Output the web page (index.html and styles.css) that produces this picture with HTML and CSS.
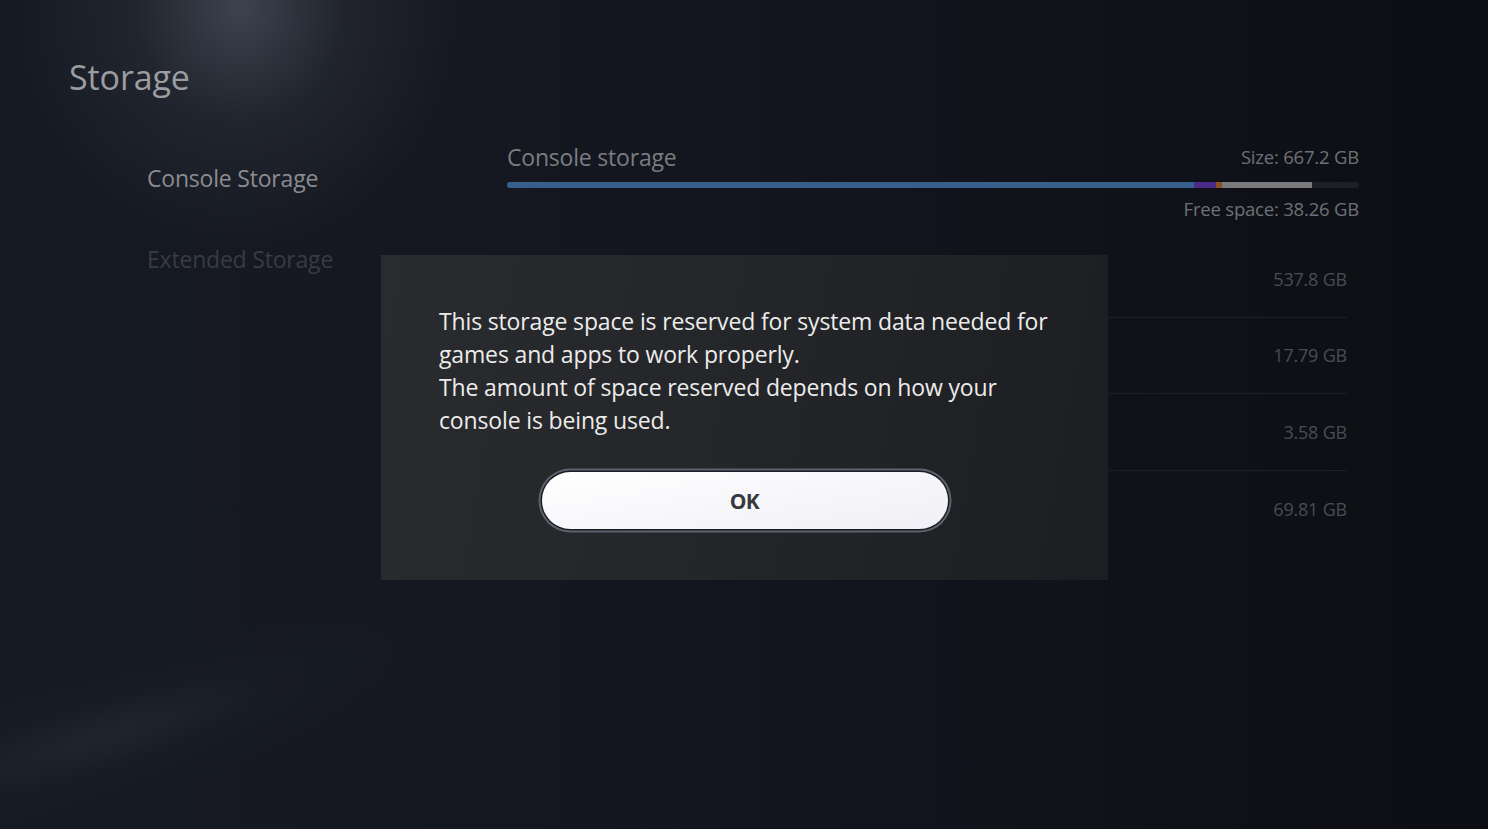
FILE: index.html
```html
<!DOCTYPE html>
<html lang="en">
<head>
<meta charset="utf-8">
<title>Storage</title>
<link rel="stylesheet" href="styles.css">
</head>
<body>
<div class="screen">
  <div class="glow-top"></div>
  <div class="glow-streak"></div>
  <h1 class="title">Storage</h1>
  <div class="layout">
    <nav class="sidebar">
      <div class="nav-item active">Console Storage</div>
      <div class="nav-item dim">Extended Storage</div>
    </nav>
    <main class="content">
      <div class="storage-head">
        <span class="storage-label">Console storage</span>
        <span class="storage-size">Size: 667.2 GB</span>
      </div>
      <div class="bar">
        <span class="seg seg-blue" style="width:687px"></span>
        <span class="seg seg-purple" style="width:22px"></span>
        <span class="seg seg-orange" style="width:6px"></span>
        <span class="seg seg-gray" style="width:90px"></span>
      </div>
      <div class="free">Free space: 38.26 GB</div>
      <ul class="rows">
        <li class="row"><span class="row-val">537.8 GB</span></li>
        <li class="row"><span class="row-val">17.79 GB</span></li>
        <li class="row"><span class="row-val">3.58 GB</span></li>
        <li class="row"><span class="row-val">69.81 GB</span></li>
      </ul>
    </main>
  </div>

  <div class="dialog">
    <p class="dialog-text">This storage space is reserved for system data needed for games and apps to work properly.<br>The amount of space reserved depends on how your console is being used.</p>
    <div class="dialog-actions">
      <button class="btn-ok">OK</button>
    </div>
  </div>
</div>
</body>
</html>
```

FILE: styles.css
```css
* { box-sizing: border-box; }

html, body {
  margin: 0;
  padding: 0;
  background: #12151c;
}

.screen {
  position: relative;
  width: 1488px;
  height: 829px;
  overflow: hidden;
  font-family: "Open Sans", "Noto Sans", sans-serif;
  background:
    linear-gradient(to right, #161a22 0%, #141720 40%, #10131a 70%, #0c0e13 100%);
}

.glow-top {
  position: absolute;
  left: -60px;
  top: -260px;
  width: 600px;
  height: 640px;
  background: radial-gradient(ellipse 50% 50% at 50% 42%, rgba(95,100,115,0.55) 0%, rgba(60,64,78,0.30) 35%, rgba(30,34,44,0) 75%);
  pointer-events: none;
}

.glow-streak {
  position: absolute;
  left: -220px;
  top: 655px;
  width: 720px;
  height: 140px;
  transform: rotate(-17deg);
  background: radial-gradient(ellipse 50% 50% at 45% 50%, rgba(44,50,62,0.45) 0%, rgba(32,37,47,0.2) 50%, rgba(20,24,32,0) 100%);
  pointer-events: none;
}

.title {
  position: relative;
  margin: 0;
  padding: 56px 0 0 69px;
  font-size: 34px;
  line-height: 42px;
  font-weight: 400;
  color: #9c9da0;
  letter-spacing: -0.1px;
}

.layout {
  position: relative;
  display: flex;
  margin-top: 44px;
}

.sidebar {
  width: 507px;
  padding: 20px 0 0 147px;
  display: flex;
  flex-direction: column;
  gap: 49px;
}

.nav-item {
  font-size: 23px;
  line-height: 32px;
  letter-spacing: -0.2px;
}
.nav-item.active { color: #8b8c8f; }
.nav-item.dim { color: #383b42; }

.content {
  width: 852px;
}

.storage-head {
  display: flex;
  justify-content: space-between;
  align-items: center;
  line-height: 30px;
}

.storage-label {
  font-size: 23px;
  color: #7b7c80;
  letter-spacing: -0.2px;
}

.storage-size {
  font-size: 18.5px;
  color: #6f7075;
  letter-spacing: -0.2px;
}

.bar {
  display: flex;
  height: 6px;
  margin-top: 10px;
  border-radius: 3px;
  overflow: hidden;
  background: #1d2027;
}
.seg { display: block; height: 100%; }
.seg-blue { background: #36608b; }
.seg-purple { background: #4a2a88; }
.seg-orange { background: #8c5026; }
.seg-gray { background: #7b7b7d; }

.free {
  margin-top: 8px;
  text-align: right;
  font-size: 18.5px;
  line-height: 26px;
  color: #6f7075;
  letter-spacing: -0.2px;
}

.rows {
  list-style: none;
  margin: 19px 12px 0 0;
  padding: 0;
}

.row {
  display: flex;
  justify-content: flex-end;
  align-items: center;
  height: 76.5px;
  border-bottom: 1px solid #1c1f26;
  font-size: 18px;
  color: #4a4c53;
  letter-spacing: -0.2px;
}
.row:last-child { border-bottom: none; }

.dialog {
  position: absolute;
  left: 381px;
  top: 255px;
  width: 727px;
  height: 325px;
  padding: 50px 49px 0 58px;
  background: linear-gradient(100deg, #2a2b2e 0%, #252629 45%, #1d1e22 100%);
}

.dialog-text {
  margin: 0;
  font-size: 23px;
  line-height: 33px;
  color: #ececec;
  letter-spacing: -0.15px;
}

.dialog-actions {
  display: flex;
  justify-content: center;
  margin: 35px -49px 0 -58px;
}

.btn-ok {
  width: 406px;
  height: 57px;
  border: none;
  border-radius: 29px;
  background: linear-gradient(170deg, #ffffff 0%, #f6f6fa 60%, #efeff5 100%);
  box-shadow: 0 0 0 1.5px #1b1d22, 0 0 0 3.5px #5e626c;
  font-family: "Open Sans", "Noto Sans", sans-serif;
  font-size: 21px;
  font-weight: 700;
  color: #38393c;
  letter-spacing: -0.5px;
  cursor: pointer;
}
```
